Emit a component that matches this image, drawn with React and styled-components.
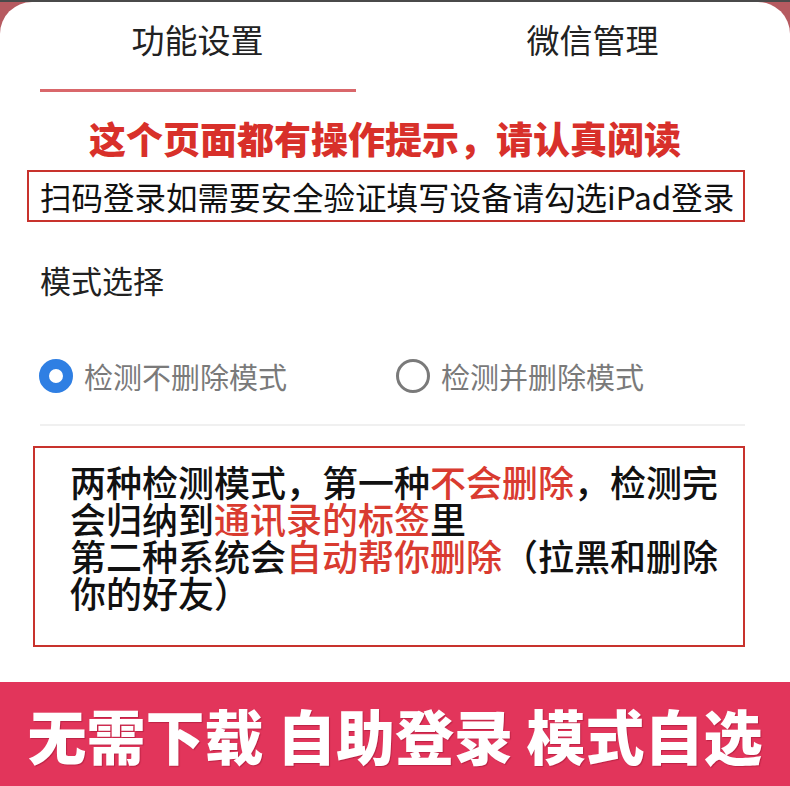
import React, { useState } from 'react';
import styled, { createGlobalStyle } from 'styled-components';

const GlobalStyle = createGlobalStyle`
  html, body {
    margin: 0;
    padding: 0;
  }
  body {
    font-family: "Noto Sans CJK SC", "Noto Sans", sans-serif;
    background: #ffffff;
  }
`;

const Page = styled.div`
  width: 790px;
  height: 786px;
  display: flex;
  flex-direction: column;
  background: #b65a60;
  border-top: 2px solid #4a4a4a;
  box-sizing: border-box;
  overflow: hidden;
`;

const Card = styled.div`
  flex: 1;
  background: #ffffff;
  border-radius: 32px 32px 0 0;
  display: flex;
  flex-direction: column;
`;

const TabBar = styled.div`
  display: grid;
  grid-template-columns: 1fr 1fr;
  height: 90px;
`;

const Tab = styled.div`
  display: flex;
  flex-direction: column;
  align-items: center;
  padding-top: 17px;
  cursor: pointer;
  font-size: 33px;
  line-height: 40px;
  color: #222222;
`;

const Indicator = styled.div`
  margin-top: auto;
  width: 80%;
  height: 3px;
  background: ${p => (p.$active ? '#d9676b' : 'transparent')};
`;

const Notice = styled.h1`
  margin: 24px 20px 0 0;
  text-align: center;
  font-size: 37px;
  line-height: 44px;
  font-weight: 900;
  color: #d8302a;
`;

const TipBox = styled.div`
  margin: 10px 45px 0 27px;
  border: 2px solid #c8322d;
  height: 52px;
  box-sizing: border-box;
  display: flex;
  align-items: center;
  padding-left: 11px;
  font-size: 31.5px;
  color: #111111;
  white-space: nowrap;
`;

const SectionTitle = styled.div`
  margin: 38px 0 0 40px;
  font-size: 31px;
  line-height: 40px;
  color: #222222;
`;

const RadioRow = styled.div`
  display: flex;
  margin: 56px 0 0 39px;
  height: 40px;
  align-items: center;
`;

const RadioOption = styled.label`
  display: flex;
  align-items: center;
  gap: 11px;
  width: 357px;
  cursor: pointer;
  font-size: 29px;
  color: #7a7a7a;
`;

const RadioDot = styled.span`
  width: 34px;
  height: 34px;
  box-sizing: border-box;
  border-radius: 50%;
  border: ${p => (p.$checked ? '10px solid #2f7fe3' : '3px solid #7a7a7a')};
  background: #ffffff;
`;

const Divider = styled.div`
  margin: 28px 45px 0 40px;
  height: 2px;
  background: #f0f0f0;
`;

const ExplainBox = styled.div`
  margin: 20px 45px 0 33px;
  border: 2px solid #c8322d;
  padding: 15px 10px 34px 35px;
  font-size: 36px;
  line-height: 37px;
  font-weight: 500;
  color: #111111;
`;

const Red = styled.span`
  color: #d93b30;
`;

const Banner = styled.div`
  height: 104px;
  flex-shrink: 0;
  background: #e2355b;
  display: flex;
  align-items: center;
  justify-content: center;
  font-size: 59px;
  font-weight: 900;
  color: #ffffff;
  white-space: pre;
  text-shadow: 1px 1px 1px rgba(120, 0, 30, 0.35);
`;

export default function App() {
  const [tab, setTab] = useState(0);
  const [mode, setMode] = useState(0);
  const tabs = ['功能设置', '微信管理'];
  const modes = ['检测不删除模式', '检测并删除模式'];

  return (
    <>
      <GlobalStyle />
      <Page>
        <Card>
          <TabBar>
            {tabs.map((t, i) => (
              <Tab key={t} onClick={() => setTab(i)}>
                {t}
                <Indicator $active={tab === i} />
              </Tab>
            ))}
          </TabBar>

          <Notice>这个页面都有操作提示，请认真阅读</Notice>
          <TipBox>扫码登录如需要安全验证填写设备请勾选iPad登录</TipBox>

          <SectionTitle>模式选择</SectionTitle>
          <RadioRow>
            {modes.map((m, i) => (
              <RadioOption key={m} onClick={() => setMode(i)}>
                <RadioDot $checked={mode === i} />
                {m}
              </RadioOption>
            ))}
          </RadioRow>
          <Divider />

          <ExplainBox>
            两种检测模式，第一种<Red>不会删除</Red>，检测完
            <br />
            会归纳到<Red>通讯录的标签</Red>里
            <br />
            第二种系统会<Red>自动帮你删除</Red>（拉黑和删除
            <br />
            你的好友）
          </ExplainBox>
        </Card>
        <Banner>无需下载 自助登录 模式自选</Banner>
      </Page>
    </>
  );
}
